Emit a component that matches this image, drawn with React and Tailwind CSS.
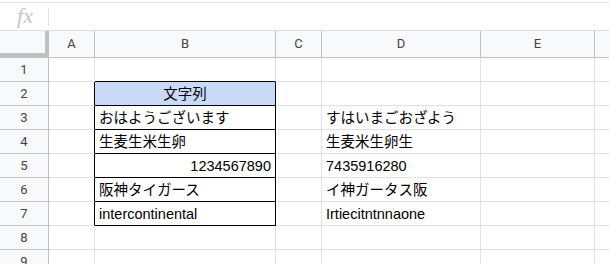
import React from "react";

const FONT = { fontFamily: '"Liberation Sans", Arial, "Noto Sans CJK JP", sans-serif' };

const cols = [
  { key: "A", w: "w-[46px]" },
  { key: "B", w: "w-[181px]" },
  { key: "C", w: "w-[46px]" },
  { key: "D", w: "w-[159px]" },
  { key: "E", w: "w-[114px]" },
  { key: "F", w: "flex-1" },
];

const rows = [
  { n: 1, b: null, d: "" },
  { n: 2, b: "文字列", d: "", head: true },
  { n: 3, b: "おはようございます", d: "すはいまごおざよう" },
  { n: 4, b: "生麦生米生卵", d: "生麦米生卵生" },
  { n: 5, b: "1234567890", d: "7435916280", right: true },
  { n: 6, b: "阪神タイガース", d: "イ神ガータス阪" },
  { n: 7, b: "intercontinental", d: "Irtiecitntnnaone" },
  { n: 8, b: null, d: "" },
  { n: 9, b: null, d: "" },
];

function Cell({ w, className = "", children }) {
  return (
    <div className={`${w} shrink-0 h-full flex items-end pb-[2px] px-[4px] text-[14.5px] leading-[17px] text-black ${className}`}>
      {children}
    </div>
  );
}

export default function App() {
  return (
    <div className="w-[609px] h-[264px] overflow-hidden bg-white" style={FONT}>
      {/* formula bar */}
      <div className="h-[31px] pt-[2px] border-b border-[#e1e1e1] bg-white">
        <div className="h-full border-t border-[#e1e1e1] flex items-center">
          <div className="w-[48px] flex items-center justify-center pl-[2px] pb-[2px]">
            <span className="italic text-[22px] leading-none text-[#c4c4c4]" style={{ fontFamily: '"Liberation Serif", serif' }}>fx</span>
          </div>
          <div className="w-px h-[18px] bg-[#e1e1e1]" />
        </div>
      </div>
      {/* column header */}
      <div className="h-[27px] flex bg-[#f8f9fa] border-b border-[#c0c0c0]">
        <div className="w-[49px] shrink-0 h-full border-r-4 border-b-4 border-[#c0c0c0] -mb-px" />
        {cols.map((c, i) => (
          <div key={c.key} className={`${c.w} shrink-0 h-full flex items-center justify-center text-[13px] text-[#444] ${i < 5 ? "border-r border-[#c0c0c0]" : ""}`} style={{ fontFamily: 'Roboto, "Liberation Sans", sans-serif' }}>
            {c.key !== "F" ? c.key : ""}
          </div>
        ))}
      </div>
      {rows.map((r) => {
        const inBox = r.n >= 2 && r.n <= 7;
        const bBottomBlack = r.n >= 1 && r.n <= 7;
        return (
          <div key={r.n} className="h-[24px] flex">
            <div className="w-[49px] shrink-0 h-full bg-[#f8f9fa] border-r border-b border-[#c0c0c0] flex items-center justify-center text-[13px] text-[#444]" style={{ fontFamily: 'Roboto, "Liberation Sans", sans-serif' }}>
              {r.n}
            </div>
            <Cell w="w-[46px]" className={`border-b border-[#e2e2e2] border-r ${inBox ? "border-r-black" : "border-r-[#e2e2e2]"}`} />
            <Cell
              w="w-[181px]"
              className={`border-r border-b ${inBox ? "border-r-black" : "border-r-[#e2e2e2]"} ${bBottomBlack ? "border-b-black" : "border-b-[#e2e2e2]"} ${r.head ? "bg-[#c9daf8] justify-center" : ""} ${r.right ? "justify-end" : ""}`}
            >
              {r.b}
            </Cell>
            <Cell w="w-[46px]" className="border-r border-b border-[#e2e2e2]" />
            <Cell w="w-[159px]" className="border-r border-b border-[#e2e2e2]">{r.d}</Cell>
            <Cell w="w-[114px]" className="border-r border-b border-[#e2e2e2]" />
            <Cell w="flex-1" className="border-b border-[#e2e2e2]" />
          </div>
        );
      })}
    </div>
  );
}
